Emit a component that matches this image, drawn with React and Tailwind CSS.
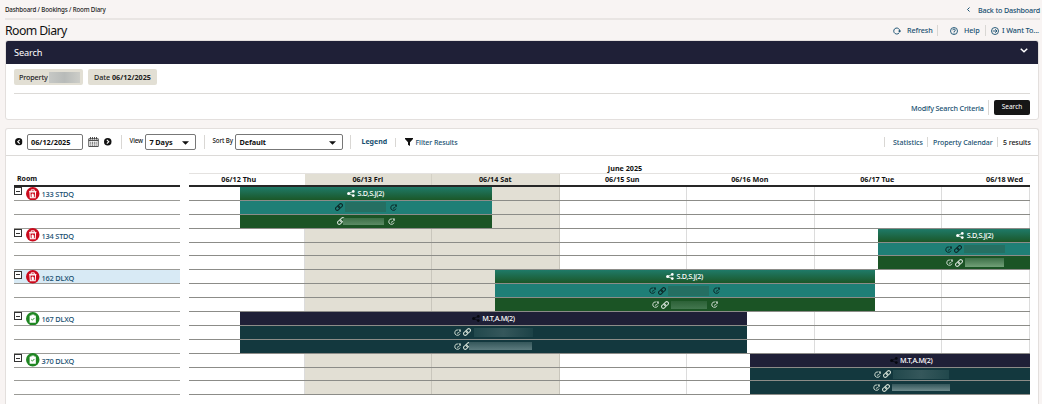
import { useState } from 'react'
import clsx from 'clsx'

const sep = 'w-px shrink-0 bg-[#d9d7d4]'
const linkClass = 'text-[#174f70] font-medium whitespace-nowrap text-left'

// the board shows pixels 0..841, stays that run on past the last day are clipped
const BOARD_WIDTH = 841

const days = [
  { label: '06/12 Thu', cell: 'w-[115.5px] pr-[16px] justify-center' },
  { label: '06/13 Fri', cell: 'w-[127.5px] justify-center', weekend: true },
  { label: '06/14 Sat', cell: 'w-[127.5px] justify-center', weekend: true },
  { label: '06/15 Sun', cell: 'w-[127.5px] pr-[2px] justify-center' },
  { label: '06/16 Mon', cell: 'w-[127.5px] pr-[2px] justify-center' },
  { label: '06/17 Tue', cell: 'w-[127.5px] pr-[2px] justify-center' },
  { label: '06/18 Wed', cell: 'w-[88px] pr-[7px] justify-end' },
]

const greenLines = ['bg-linear-to-b from-[#1f7a68] to-[#1b5727]', 'bg-[#1f7f76]', 'bg-[#1b5425]']
const navyLines = ['bg-[#1f2037]', 'bg-[#13383e]', 'bg-[#13383e]']

const rooms = [
  {
    name: '133 STDQ', dirty: true, start: 50.5, end: 302.5, guest: 'S.D,S.J(2)', lines: greenLines,
    details: [
      { before: ['link'], mask: 'w-[41px] h-[10px] bg-[#256f62]', after: true, dark: true },
      { before: ['link'], mask: 'w-[41px] h-[7px] -ml-[4px] bg-linear-to-b from-[#3c7047] to-[#5c8b65]', after: true },
    ],
  },
  {
    name: '134 STDQ', dirty: true, start: 688.5, end: 883, guest: 'S.D,S.J(2)', lines: greenLines,
    details: [
      { before: ['clock', 'link'], mask: 'w-[41px] h-[8px] bg-[#256f62]', dark: true },
      { before: ['clock', 'link'], mask: 'w-[39px] h-[9px] bg-linear-to-b from-[#3c7047] to-[#72a078]' },
    ],
  },
  {
    name: '162 DLXQ', dirty: true, selected: true, start: 305.5, end: 685.5, guest: 'S.D,S.J(2)', lines: greenLines,
    details: [
      { before: ['clock', 'link'], mask: 'w-[41px] h-[10px] bg-[#256f62]', after: true, dark: true },
      { before: ['clock', 'link'], mask: 'w-[36px] h-[8px] bg-linear-to-b from-[#2c6137] to-[#43774f]', after: true },
    ],
  },
  {
    name: '167 DLXQ', start: 50.5, end: 558, guest: 'M.T,A.M(2)', lines: navyLines, darkShare: true,
    details: [
      { before: ['clock', 'link'], mask: 'w-[59px] h-[9px] ml-[1px] bg-linear-to-r from-[#21484c] via-[#35575b] to-[#1c4247]' },
      { before: ['clock', 'link'], mask: 'w-[63px] h-[8px] -ml-[4px] bg-linear-to-b from-[#35575b] to-[#5c7b7e]' },
    ],
  },
  {
    name: '370 DLXQ', start: 561, end: 883, guest: 'M.T,A.M(2)', lines: navyLines, darkShare: true,
    details: [
      { before: ['clock', 'link'], mask: 'w-[56px] h-[9px] bg-linear-to-r from-[#21484c] via-[#35575b] to-[#21484c]' },
      { before: ['clock', 'link'], mask: 'w-[58px] h-[7px] bg-linear-to-b from-[#35575b] to-[#6f8b8d]' },
    ],
  },
]

function LinkIcon() {
  return (
    <svg viewBox="0 0 16 16" className="w-[8px] h-[8px] shrink-0" fill="none" stroke="currentColor" strokeWidth="2">
      <rect x="5.800" y="2.400" width="9.400" height="6.600" rx="3.300" transform="rotate(-45 10.500 5.700)" />
      <rect x="0.800" y="7" width="9.400" height="6.600" rx="3.300" transform="rotate(-45 5.500 10.300)" />
    </svg>
  )
}

function ClockIcon() {
  return (
    <svg viewBox="0 0 16 16" className="w-[7px] h-[7px] shrink-0" fill="none" stroke="currentColor" strokeWidth="2.100">
      <path d="M9 2.200A6.200 6.200 0 1 0 13.700 10.500" />
      <path d="M7 9.500h2.500L13 5.500" />
      <path d="M10.500 1.500h4.500v4.500z" fill="currentColor" strokeWidth="1" />
    </svg>
  )
}

function ShareIcon({ dark }) {
  return (
    <svg viewBox="0 0 16 14" className={clsx('w-[8px] h-[7px] shrink-0', dark ? 'text-[#07080f]' : 'text-white')} fill="currentColor">
      <circle cx="3.2" cy="7" r="3" />
      <circle cx="12.6" cy="2.8" r="2.7" />
      <circle cx="12.6" cy="11.2" r="2.7" />
      <path d="M3 7l9.500-4.200M3 7l9.500 4.200" stroke="currentColor" strokeWidth="1.5" />
    </svg>
  )
}

function ArrowBadge({ left }) {
  return (
    <svg viewBox="0 0 14 14" className={clsx('w-[7.500px] h-[7.500px] shrink-0', left && 'rotate-180')}>
      <circle cx="7" cy="7" r="7" fill="#111" />
      <path d="M5.300 3.300L9 7l-3.700 3.700" fill="none" stroke="#fff" strokeWidth="2" />
    </svg>
  )
}

function CalendarIcon() {
  return (
    <svg viewBox="0 0 22 20" className="w-[11px] h-[10px] shrink-0" fill="none" stroke="#333" strokeWidth="1.700">
      <path d="M1.500 3.500h19v15.500h-19zM1.500 7h19" />
      <path d="M5 0v5M9 0v5M13 0v5M17 0v5" />
      <path d="M4.500 10.500h13M4.500 13.500h13M4.500 16.300h13" strokeDasharray="2 1.600" />
    </svg>
  )
}

function Caret() {
  return <svg viewBox="0 0 12 6" className="w-[7px] h-[4px] shrink-0"><path d="M0 0h12L6 6z" fill="#111" /></svg>
}

function RoomStatus({ dirty }) {
  if (dirty) {
    return (
      <svg viewBox="0 0 26 26" className="w-[13.500px] h-[13.500px] shrink-0">
        <circle cx="13" cy="13" r="13" fill="#cb0a1d" />
        <path d="M6 8.500h14M10 8V5.500h6V8" fill="none" stroke="#fff" strokeWidth="1.800" />
        <path d="M7.500 9.500h11l-.8 11H8.300z" fill="none" stroke="#fff" strokeWidth="2" />
        <path d="M10.800 20v-5.500l2.200-2.500 2.200 2.500V20z" fill="#fff" />
      </svg>
    )
  }
  return (
    <svg viewBox="0 0 26 26" className="w-[13.500px] h-[13.500px] shrink-0">
      <circle cx="13" cy="13" r="13" fill="#1f8622" />
      <rect x="7" y="6.500" width="12" height="14" rx="1" fill="#fff" />
      <path d="M10.500 5h5.500v2.500h-5.500z" fill="#fff" />
      <path d="M10 13.500l2.300 2.200 3.900-4.200" fill="none" stroke="#1f8622" strokeWidth="1.800" />
    </svg>
  )
}

function Stay({ room, line }) {
  const detail = room.details[line - 1]
  return (
    <div
      className={clsx('h-full shrink-0 flex items-center justify-center', room.lines[line])}
      style={{ marginLeft: room.start, width: room.end - room.start }}
    >
      {line === 0 ? (
        <div className="flex items-center gap-[2.500px] text-white text-[7.200px] leading-none">
          <ShareIcon dark={room.darkShare} />
          <span className="whitespace-nowrap font-medium tracking-[-0.300px]">{room.guest}</span>
        </div>
      ) : (
        <div className={clsx('flex items-center gap-[2px]', detail.dark ? 'text-[#0b2626]' : 'text-[#d3e0d6]')}>
          {detail.before.map(icon => (icon === 'link' ? <LinkIcon key={icon} /> : <ClockIcon key={icon} />))}
          <span className={clsx('shrink-0', detail.mask)} />
          {detail.after && <span className="ml-[2px]"><ClockIcon /></span>}
        </div>
      )}
    </div>
  )
}

function Header() {
  return (
    <header className="pl-[5px] pr-[2px]">
      <div className="h-[20px] flex items-center justify-between border-b-2 border-[#e9e5e3]">
        <span className="text-[6.200px] font-medium text-[#222] whitespace-nowrap tracking-[-0.150px] pt-[1px]">Dashboard / Bookings / Room Diary</span>
        <a className={clsx(linkClass, 'flex items-center gap-[8px] text-[7.200px] pt-[2px] tracking-[-0.170px]')}>
          <svg viewBox="0 0 6 10" className="w-[3px] h-[5px]" fill="none" stroke="currentColor" strokeWidth="2"><path d="M5 1L1 5l4 4" /></svg>
          <span className="w-[62px]">Back to Dashboard</span>
        </a>
      </div>
      <div className="h-[20px] flex items-center justify-between">
        <h1 className="text-[12.300px] leading-none text-[#111] whitespace-nowrap tracking-[-0.600px] pt-[2px]">Room Diary</h1>
        <div className="flex items-center text-[7.200px] h-[12px] pt-[1px] tracking-[-0.100px]">
          <svg viewBox="0 0 16 16" className="w-[8px] h-[8px] text-[#174f70]" fill="none" stroke="currentColor" strokeWidth="1.900">
            <path d="M12 12A6 6 0 1 1 13.500 8" />
            <path d="M10.500 7.500h5.500L13.300 11z" fill="currentColor" strokeWidth="0.500" />
          </svg>
          <a className={clsx(linkClass, 'ml-[6px] w-[25px]')}>Refresh</a>
          <span className={clsx(sep, 'h-[11px] ml-[5px]')} />
          <svg viewBox="0 0 16 16" className="w-[8px] h-[8px] ml-[12px] text-[#174f70]" fill="none" stroke="currentColor" strokeWidth="1.800">
            <circle cx="8" cy="8" r="7" />
            <path d="M5.500 6.500a2.500 2.500 0 1 1 2.500 2.500v1.500M8 11.500v1.500" />
          </svg>
          <a className={clsx(linkClass, 'ml-[6px] w-[15px]')}>Help</a>
          <span className={clsx(sep, 'h-[11px] ml-[6px]')} />
          <svg viewBox="0 0 16 16" className="w-[8px] h-[8px] ml-[5px] text-[#174f70]" fill="none" stroke="currentColor" strokeWidth="1.800">
            <circle cx="8" cy="8" r="7" />
            <path d="M3.500 8h8M8.300 4.500L12 8l-3.700 3.500" />
          </svg>
          <a className={clsx(linkClass, 'ml-[3px] w-[38px]')}>I Want To...</a>
        </div>
      </div>
    </header>
  )
}

function SearchPanel() {
  return (
    <section className="mx-[5px] mr-[3px] h-[80px] rounded-[3px] border border-[#e3dfdd] bg-white overflow-hidden">
      <div className="h-[23px] bg-[#1f2037] flex items-center justify-between pl-[8px] pr-[10px]">
        <h2 className="text-[9.200px] text-white tracking-[-0.150px]">Search</h2>
        <svg viewBox="0 0 16 10" className="w-[8px] h-[5px] mb-[5px]" fill="none" stroke="#fff" strokeWidth="3"><path d="M1.500 1.500L8 7.500l6.500-6" /></svg>
      </div>
      <div className="mx-[8px]">
        <div className="h-[30px] pt-[5px] flex gap-[5px] border-b border-[#dcdad7] text-[7.200px] text-[#222]">
          <div className="h-[16px] w-[69px] rounded-[2px] bg-[#e2dfd4] flex items-center pl-[5px]">
            <span className="w-[30px] whitespace-nowrap font-medium tracking-[-0.150px] pt-[1px]">Property</span>
            <span className="w-[31px] h-[11px] bg-linear-to-r from-[#c6c8c5] via-[#b8bbb9] to-[#cccdc8]" />
          </div>
          <div className="h-[16px] w-[69px] rounded-[2px] bg-[#e2dfd4] flex items-center pl-[6px] pt-[1px] whitespace-nowrap">
            <span className="w-[18px] font-medium">Date</span>
            <b>06/12/2025</b>
          </div>
        </div>
        <div className="h-[26px] flex items-center justify-end text-[7.200px]">
          <a className={clsx(linkClass, 'w-[72px] pt-[2px] tracking-[-0.150px]')}>Modify Search Criteria</a>
          <span className={clsx(sep, 'h-[15px] ml-[5px] mr-[5px]')} />
          <button className="w-[36px] h-[15px] rounded-[2px] bg-[#161616] text-white text-[6.500px]">Search</button>
        </div>
      </div>
    </section>
  )
}

function Toolbar() {
  return (
    <div className="h-[27px] flex items-center pl-[8.500px] pr-[8px] border-b border-[#dcdad8] text-[7px] text-[#111]">
      <ArrowBadge left />
      <div className="ml-[5px] w-[56px] h-[16px] rounded-[2px] border border-[#777] flex items-center pl-[3px] pt-[1px] font-bold text-[7.300px]">06/12/2025</div>
      <span className="ml-[5px]"><CalendarIcon /></span>
      <span className="ml-[5px]"><ArrowBadge /></span>
      <span className={clsx(sep, 'h-[14px] ml-[9px]')} />
      <span className="ml-[8px] mb-[3px] w-[15px] text-[6.200px] font-medium whitespace-nowrap tracking-[-0.100px]">View</span>
      <button className="w-[51px] h-[16px] rounded-[2px] border border-[#777] flex items-center justify-between pl-[4px] pr-[6px] pt-[1px] font-bold text-[7.300px] tracking-[-0.100px]">
        7 Days <Caret />
      </button>
      <span className={clsx(sep, 'h-[14px] ml-[8px]')} />
      <span className="ml-[8px] mb-[3px] w-[22px] text-[6.200px] font-medium whitespace-nowrap tracking-[-0.100px]">Sort By</span>
      <button className="w-[108px] h-[16px] rounded-[2px] border border-[#777] flex items-center justify-between pl-[4px] pr-[6px] pt-[1px] font-bold text-[7.300px] tracking-[-0.100px]">
        Default <Caret />
      </button>
      <span className={clsx(sep, 'h-[14px] ml-[7px]')} />
      <a className="ml-[11px] w-[26px] pt-[1px] font-bold text-[#174f70]">Legend</a>
      <span className={clsx(sep, 'h-[9px] ml-[7px]')} />
      <svg viewBox="0 0 16 16" className="w-[8px] h-[8px] ml-[9px] shrink-0"><path d="M0 0h16v2l-6 6.500V16l-4-2.500v-5L0 2z" fill="#111" /></svg>
      <a className={clsx(linkClass, 'ml-[3px] pt-[2px] tracking-[-0.080px]')}>Filter Results</a>
      <span className={clsx(sep, 'h-[10px] ml-auto')} />
      <a className={clsx(linkClass, 'ml-[8px] w-[29px] pt-[3px]')}>Statistics</a>
      <span className={clsx(sep, 'h-[10px] ml-[5px]')} />
      <a className={clsx(linkClass, 'ml-[5px] w-[59px] pt-[3px] tracking-[-0.080px]')}>Property Calendar</a>
      <span className={clsx(sep, 'h-[10px] ml-[5px]')} />
      <span className="ml-[5px] w-[27px] pt-[3px] font-medium whitespace-nowrap tracking-[-0.080px]">5 results</span>
    </div>
  )
}

function RoomList({ collapsed, onToggle }) {
  return (
    <div className="w-[166px] shrink-0">
      <div className="h-[30px] flex items-end pl-[3px] pb-[2px] border-b-2 border-[#262626] text-[7px] leading-[9px] font-bold text-[#111]">Room</div>
      {rooms.map(room => (
        <div key={room.name}>
          <div className={clsx('h-[13.900px] flex items-center border-b border-[#9b9b97]', room.selected && 'bg-[#d8eaf5]')}>
            <button onClick={() => onToggle(room.name)} className="w-[8px] h-[8px] mb-[4px] shrink-0 border border-[#333] bg-white flex items-center justify-center">
              <span className="w-[4px] h-px bg-[#333]" />
            </button>
            <span className="ml-[4px]"><RoomStatus dirty={room.dirty} /></span>
            <a className="ml-[2px] pt-[3px] text-[7.400px] font-medium text-[#174f70] leading-none whitespace-nowrap tracking-[-0.200px]">{room.name}</a>
          </div>
          {!collapsed[room.name] && (
            <>
              <div className="h-[13.900px] border-b border-[#9b9b97]" />
              <div className="h-[13.900px] border-b border-[#9b9b97]" />
            </>
          )}
        </div>
      ))}
    </div>
  )
}

function Timeline({ collapsed }) {
  return (
    <div className="ml-[9px] overflow-hidden" style={{ width: BOARD_WIDTH }}>
      <div className="h-[17px] flex items-end justify-center pl-[31px] text-[7.200px] leading-[9px] font-bold text-[#111] border-b border-[#e4e2e0]">
        June 2025
      </div>
      <div className="h-[13px] flex border-b-2 border-[#262626] text-[7.200px] leading-none font-bold text-[#111]">
        {days.map(day => (
          <div key={day.label} className={clsx('shrink-0 flex items-center pt-[1px] whitespace-nowrap', day.cell, day.weekend && 'bg-[#e2dfd4] border-r border-[#d4d1c6]')}>
            {day.label}
          </div>
        ))}
      </div>
      <div className="relative">
        {/* Day columns behind the rows */}
        <div className="absolute inset-0 flex">
          {days.map(day => (
            <div key={day.label} className={clsx('shrink-0 border-r', day.cell, day.weekend ? 'bg-[#e2dfd4] border-[#c9c6bc]' : 'border-[#dcdcdc]')} />
          ))}
        </div>
        <div className="relative">
          {rooms.map(room => (
            <div key={room.name}>
              {(collapsed[room.name] ? [0] : [0, 1, 2]).map(line => (
                <div key={line} className="h-[13.900px] flex overflow-hidden border-b border-[#8c8c88]">
                  <Stay room={room} line={line} />
                </div>
              ))}
            </div>
          ))}
        </div>
      </div>
    </div>
  )
}

export default function App() {
  const [collapsed, setCollapsed] = useState({})

  function toggleRoom(name) {
    setCollapsed(c => ({ ...c, [name]: !c[name] }))
  }

  return (
    <div className="w-[1042px] h-[404px] overflow-hidden bg-[#f8f4f3] font-['Noto_Sans',sans-serif] flex flex-col">
      <Header />
      <SearchPanel />
      <section className="mt-[8px] ml-[5px] mr-[3px] grow rounded-t-[3px] border border-b-0 border-[#e3dfdd] bg-white">
        <Toolbar />
        <div className="flex pl-[8px] pt-[1px]">
          <RoomList collapsed={collapsed} onToggle={toggleRoom} />
          <Timeline collapsed={collapsed} />
        </div>
      </section>
    </div>
  )
}
